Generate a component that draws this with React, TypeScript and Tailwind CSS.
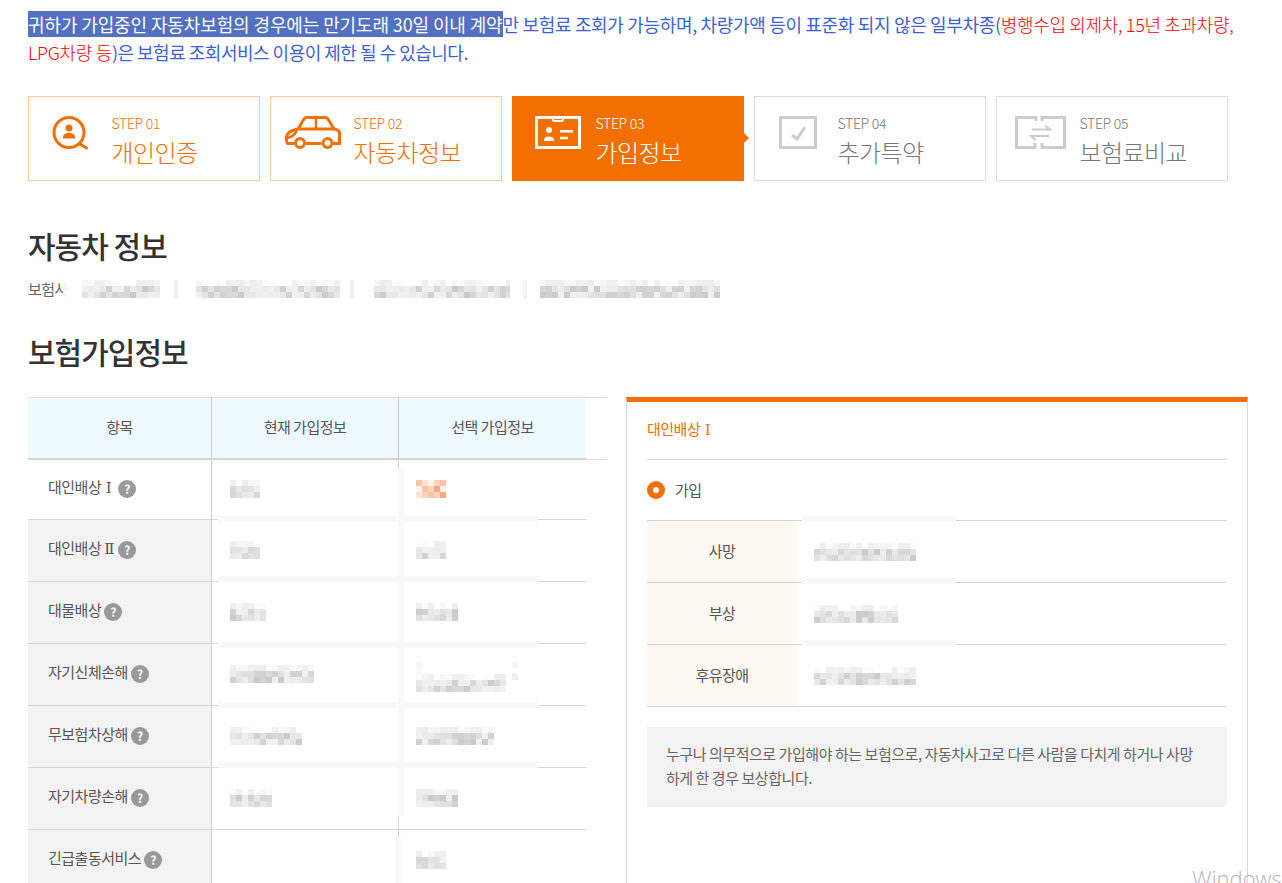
import type { ReactNode } from 'react';

const grays = ['#e4e4e4', '#d8d8d8', '#ececec', '#cccccc', '#e0e0e0', '#f0f0f0', '#d2d2d2', '#e8e8e8'];
const faint = ['#f6f6f6', '#f0f0f0', '#fbfbfb', '#eeeeee', '#ffffff'];
const oranges = ['#fde3d4', '#f9c3a4', '#fbd3ba', '#f5aa7a', '#fff3ec', '#f9c8aa'];

// redacted values in the picture are a 6px mosaic
function Mosaic({ w, h = 18, seed = 1, tint = grays }: { w: number; h?: number; seed?: number; tint?: string[] }) {
  const cells: ReactNode[] = [];
  let n = seed * 7 + 3;
  for (let y = 0; y < h; y += 6) {
    for (let x = 0; x < w; x += 6) {
      n = (n * 31 + 11) % 101;
      const set = y === 0 && h > 6 && tint === grays ? faint : tint;
      cells.push(<rect key={`${x}-${y}`} x={x} y={y} width={6} height={6} fill={set[n % set.length]} />);
    }
  }
  return (
    <svg width={w} height={h} viewBox={`0 0 ${w} ${h}`} shapeRendering="crispEdges" className="block shrink-0">
      {cells}
    </svg>
  );
}

function IconSearchPerson() {
  return (
    <svg width="36" height="34" viewBox="0 0 36 34" fill="none" stroke="#f36f00" strokeWidth="3">
      <circle cx="17" cy="16.5" r="15" />
      <path d="M28 28l6.5 4" strokeLinecap="round" />
      <circle cx="17" cy="12" r="3.5" fill="#f36f00" stroke="none" />
      <path d="M11 22.5v-1.5c0-2.5 2.5-4 6-4s6 1.500 6 4v1.500z" fill="#f36f00" stroke="none" />
    </svg>
  );
}

function IconCar() {
  return (
    <svg width="56" height="33" viewBox="0 0 56 33" fill="none" stroke="#f36f00" strokeWidth="3">
      <path d="M13 13L19 3Q20 1.500 22 1.500H40Q42 1.500 43 3L49 13Q55 14 54.500 18V27.500H48M36.500 27.500H21M9 27.500H2.500Q1.500 27 1.500 22Q1.500 15 13 13H49" />
      <path d="M31 1.500V13M2 22Q9 21 12 14" strokeWidth="2.500" />
      <circle cx="15" cy="27" r="4.500" />
      <circle cx="42.500" cy="27" r="4.500" />
    </svg>
  );
}

function IconCard() {
  return (
    <svg width="46" height="33" viewBox="0 0 46 33" fill="none" stroke="#fff" strokeWidth="3">
      <rect x="1.500" y="1.500" width="43" height="30" />
      <path d="M18 2v1.500q0 1.500 1.500 1.500h7q1.500 0 1.500-1.500V2" strokeWidth="2" />
      <circle cx="14" cy="14" r="3" fill="#fff" stroke="none" />
      <path d="M9 25v-1c0-2 2-3.500 5-3.500s5 1.500 5 3.500v1z" fill="#fff" stroke="none" />
      <path d="M25 15.200h13M25 22h8" strokeWidth="2.500" />
    </svg>
  );
}

function IconCheck() {
  return (
    <svg width="38" height="33" viewBox="0 0 38 33" fill="none" stroke="#cccccc" strokeWidth="3">
      <rect x="1.500" y="1.500" width="35" height="30" />
      <path d="M13 19l5 4 8-12" />
    </svg>
  );
}

function IconSwap() {
  return (
    <svg width="51" height="33" viewBox="0 0 51 33" fill="none" stroke="#cccccc" strokeWidth="3">
      <path d="M21 5V1.500H1.500V31.500H20V27" />
      <path d="M27 5V1.500H49.500V31.500H27V27" />
      <path d="M17 13.500H35L30 9.500M34 20H16L21 24" strokeWidth="2" />
    </svg>
  );
}

const steps = [
  { no: '01', title: '개인인증', icon: <IconSearchPerson />, kind: 'done', slot: 'pr-[2px]' },
  { no: '02', title: '자동차정보', icon: <IconCar />, kind: 'done', slot: 'pl-[1px]' },
  { no: '03', title: '가입정보', icon: <IconCard />, kind: 'active', slot: 'pl-[6px]' },
  { no: '04', title: '추가특약', icon: <IconCheck />, kind: 'todo', slot: 'pl-[2px]' },
  { no: '05', title: '보험료비교', icon: <IconSwap />, kind: 'todo', slot: 'pl-[3px]' },
];

function StepCard({ no, title, icon, kind, slot }: { no: string; title: string; icon: ReactNode; kind: string; slot: string }) {
  const box =
    kind === 'active'
      ? 'bg-[#f36f00] border-[#f36f00] text-white'
      : kind === 'done'
        ? 'border-[#fbc89d] text-[#f36f00]'
        : 'border-[#dcdcdc] text-[#777777]';
  return (
    <div className={`relative flex h-[85px] w-[232px] border ${box}`}>
      <div className={`flex h-full w-[83px] shrink-0 items-center justify-center pb-[12px] ${slot}`}>{icon}</div>
      <div className="pt-[16px]">
        <div className="ml-[-0.5px] h-[20px] text-[14px] leading-[21px] font-light tracking-[-0.3px]">STEP {no}</div>
        <div className="mt-[3px] ml-[-0.5px] h-[32px] text-[24px] leading-[32px] font-light tracking-[-0.6px]">{title}</div>
      </div>
      {kind === 'active' ? (
        <div className="absolute top-[35px] right-[-6px] h-0 w-0 border-y-[6px] border-l-[6px] border-y-transparent border-l-[#f36f00]" />
      ) : null}
    </div>
  );
}

function Help() {
  return (
    <span className="mt-[3px] ml-[3px] inline-flex h-[18px] w-[18px] shrink-0 items-center justify-center rounded-full bg-[#999999] text-[12px] leading-none font-bold text-white">
      ?
    </span>
  );
}

function RomanOne() {
  return <span className="mr-[3px] ml-[1px] inline-block w-[7px] text-center font-['DejaVu_Serif',serif] text-[15px] leading-none">Ⅰ</span>;
}

function RomanTwo() {
  return <span className="ml-[2px] inline-block w-[12px] text-center font-['DejaVu_Serif',serif] text-[15px] leading-none">Ⅱ</span>;
}

const rows = [
  { label: <>대인배상 <RomanOne /></>, key: 'a', a: 30, b: 30, plain: true, seed: 2 },
  { label: <>대인배상<RomanTwo /></>, key: 'b', a: 30, b: 30, seed: 3 },
  { label: '대물배상', key: 'c', a: 36, b: 42, seed: 4 },
  { label: '자기신체손해', key: 'd', a: 84, b: 0, seed: 5 },
  { label: '무보험차상해', key: 'e', a: 72, b: 78, seed: 6 },
  { label: '자기차량손해', key: 'f', a: 42, b: 42, seed: 7 },
  { label: '긴급출동서비스', key: 'g', a: 0, b: 30, seed: 8 },
];

const coverRows = [
  { label: '사망', w: 102, seed: 11 },
  { label: '부상', w: 84, seed: 12 },
  { label: '후유장애', w: 102, seed: 13 },
];

export default function App() {
  return (
    <div className="relative h-[883px] overflow-hidden bg-white pl-[28px] font-['Noto_Sans_CJK_KR','Noto_Sans',sans-serif] text-[#555555]">
      <p className="w-[1215px] pt-[10px] text-[18px] leading-[28px] tracking-[-0.33px] text-[#3f5fd6]">
        <span className="bg-[#5470c0] tracking-[-0.12px] text-white">귀하가 가입중인 자동차보험의 경우에는 만기도래 30일 이내 계약</span>
        만 보험료 조회가 가능하며, 차량가액 등이 표준화 되지 않은 일부차종(
        <span className="font-light text-[#ff0000]">병행수입 외제차, 15년 초과차량, LPG차량 등</span>
        <span className="tracking-[-0.5px]">)은 보험료 조회서비스 이용이 제한 될 수 있습니다.</span>
      </p>

      <div className="mt-[30px] flex gap-[10px]">
        {steps.map((s) => (
          <StepCard key={s.no} {...s} />
        ))}
      </div>

      <h2 className="mt-[43px] text-[30px] leading-[42px] font-medium tracking-[-1px] text-[#333333]">자동차 정보</h2>
      <div className="mt-[13px] flex h-[20px] items-center text-[15px] tracking-[-0.5px] text-[#666666]">
        <span className="relative w-[38px] whitespace-nowrap">
          보험사
          <span className="absolute top-0 left-[35px] h-[20px] w-[12px] bg-white/90" />
        </span>
        <div className="ml-[16px]"><Mosaic w={78} seed={21} /></div>
        <div className="ml-[14px] h-[18px] w-[4px] bg-[#f3f3f3]" />
        <div className="ml-[18px]"><Mosaic w={144} seed={22} /></div>
        <div className="ml-[10px] h-[18px] w-[4px] bg-[#f3f3f3]" />
        <div className="ml-[20px]"><Mosaic w={136} seed={23} /></div>
        <div className="ml-[13px] h-[18px] w-[4px] bg-[#f3f3f3]" />
        <div className="ml-[13px]"><Mosaic w={180} seed={24} /></div>
      </div>

      <h2 className="mt-[31px] text-[30px] leading-[42px] font-medium tracking-[-1px] text-[#333333]">보험가입정보</h2>

      <div className="mt-[25px] flex items-stretch">
        <div className="relative w-[579px] shrink-0 text-[15px] tracking-[-0.5px]">
          <div className="border-y border-[#dddddd]">
            <div className="mb-[-1px] flex h-[62px] w-[558px] border-b-2 border-[#d5d5d5] bg-[#eefaff] text-center leading-[57px]">
              <div className="w-[184px] border-r border-[#cccccc]">항목</div>
              <div className="w-[187px] border-r border-[#cccccc]">현재 가입정보</div>
              <div className="flex-1">선택 가입정보</div>
            </div>
          </div>
          {rows.map((r, i) => (
            <div key={r.key} className={`flex w-[558px] border-b border-[#d5d5d5] ${i === 0 ? 'h-[60px]' : 'h-[62px]'}`}>
              <div className={`flex w-[184px] items-center border-r border-[#cccccc] pb-[5px] pl-[20px] ${r.plain ? '' : 'bg-[#f3f3f3]'}`}>
                <span>{r.label}</span>
                <Help />
              </div>
              <div className="flex w-[187px] items-center border-r border-[#d5d5d5] pb-[2px] pl-[18px]">
                {r.a > 0 ? <Mosaic w={r.a} seed={r.seed} /> : null}
              </div>
              <div className="flex flex-1 items-center pb-[2px] pl-[17px]">
                {r.b > 0 ? <Mosaic w={r.b} seed={r.seed + 30} tint={i === 0 ? oranges : grays} /> : null}
                {i === 3 ? (
                  <div className="relative h-[36px] w-[102px]">
                    <div className="absolute top-0 left-0"><Mosaic w={6} h={24} seed={41} tint={faint} /></div>
                    <div className="absolute top-0 left-[96px]"><Mosaic w={6} h={24} seed={42} tint={faint} /></div>
                    <div className="absolute top-[18px] left-0"><Mosaic w={90} seed={43} /></div>
                  </div>
                ) : null}
              </div>
            </div>
          ))}
          {/* smudges left by the redaction, they lie over the rules */}
          <div className="absolute top-[119px] left-[190px] h-[6px] w-[320px] bg-[#f8f8f8]" />
          <div className="absolute top-[179px] left-[190px] h-[6px] w-[320px] bg-[#f8f8f8]" />
          <div className="absolute top-[245px] left-[190px] h-[6px] w-[320px] bg-[#f8f8f8]" />
          <div className="absolute top-[305px] left-[190px] h-[6px] w-[320px] bg-[#f8f8f8]" />
          <div className="absolute top-[365px] left-[190px] h-[6px] w-[320px] bg-[#f8f8f8]" />
          <div className="absolute top-[71px] left-[370px] h-[348px] w-[6px] bg-[#f8f8f8]" />
          <div className="absolute top-[441px] left-[367px] h-[45px] w-[6px] bg-[#f8f8f8]" />
        </div>

        <div className="ml-[19px] h-[500px] w-[622px] shrink-0 border-x border-t-[5px] border-x-[#d8d8d8] border-t-[#f36f00] px-[20px] text-[15px] tracking-[-0.5px]">
          <div className="h-[58px] border-b border-[#d8d8d8] pt-[17px] leading-[20px] text-[#f36f00]">대인배상 <RomanOne /></div>
          <div className="flex h-[60px] items-center">
            <span className="flex h-[18px] w-[18px] items-center justify-center rounded-full bg-[#f36f00]">
              <span className="h-[6px] w-[6px] rounded-full bg-white" />
            </span>
            <span className="ml-[10px]">가입</span>
          </div>
          <div className="border-t border-[#d5d5d5]">
            {coverRows.map((c) => (
              <div key={c.label} className="flex h-[62px] border-b border-[#d5d5d5]">
                <div className="flex w-[150px] items-center justify-center bg-[#fef7f2] pb-[1px]">{c.label}</div>
                <div className="relative flex flex-1 items-center pl-[17px]">
                  <Mosaic w={c.w} seed={c.seed} />
                  <div className="absolute top-[-5px] left-[5px] h-[6px] w-[154px] bg-[#f8f8f8]" />
                </div>
              </div>
            ))}
          </div>
          <div className="mt-[20px] h-[80px] bg-[#f3f3f3] px-[19px] py-[15px] text-[15px] leading-[24px] tracking-[-0.45px] text-[#666666]">
            누구나 의무적으로 가입해야 하는 보험으로, 자동차사고로 다른 사람을 다치게 하거나 사망
            <br />
            하게 한 경우 보상합니다.
          </div>
        </div>
      </div>

      <div className="absolute top-[864px] left-[1192px] font-['Open_Sans',sans-serif] text-[22px] leading-[28px] font-light text-[#b5b5b5]">
        Windows
      </div>
    </div>
  );
}
